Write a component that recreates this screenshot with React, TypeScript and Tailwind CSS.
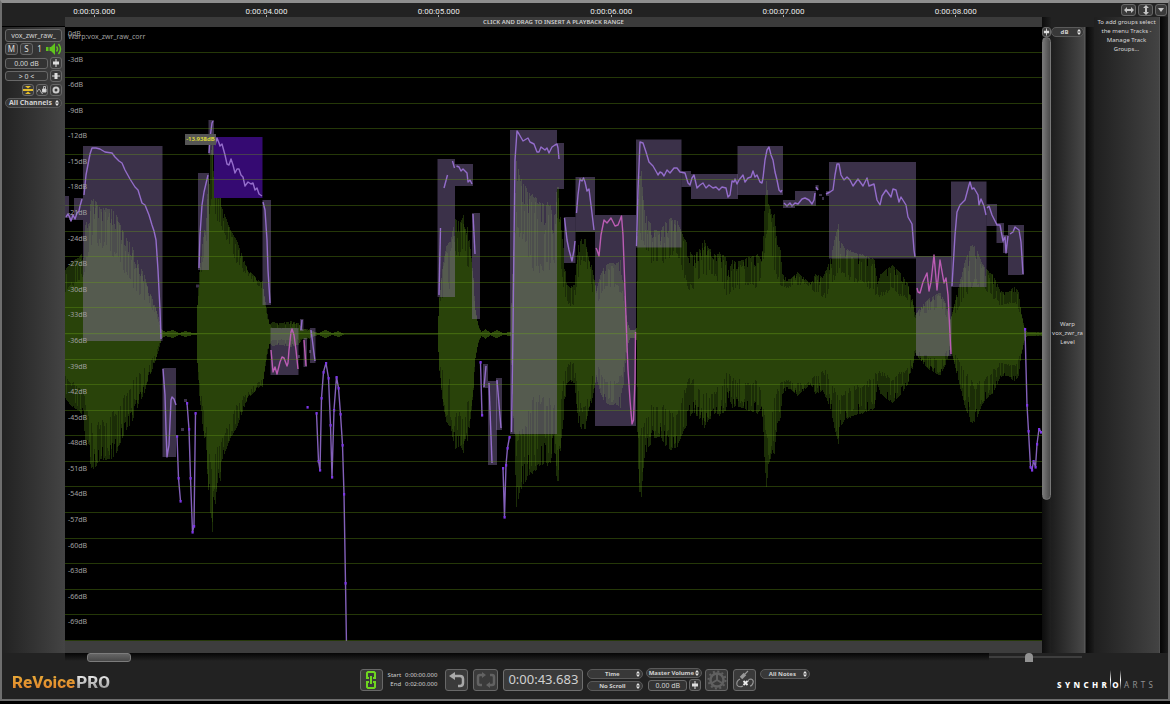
import type { ReactNode } from "react";

type Point = [number, number];

const CENTER = 334;

const times = ["0:00:03.000", "0:00:04.000", "0:00:05.000", "0:00:06.000", "0:00:07.000", "0:00:08.000"];

const levels = Array.from({ length: 24 }, (_, i) => (i === 0 ? "0dB" : `-${i * 3}dB`));

// Peak level of the waveform: x, distance from the centre line
const peaks: Point[] = [
  [65, 64], [70, 72], [78, 77], [83, 84], [85, 111], [91, 134], [93, 136], [100, 127], [112, 126], [116, 119],
  [126, 96], [132, 88], [137, 74], [143, 62], [148, 46], [155, 27], [158, 17], [161, 5], [165, 2], [172, 4],
  [179, 1], [185, 3], [192, 1], [196, 1], [197, 30], [200, 78], [205, 111], [208, 157], [210, 180], [211, 208],
  [212, 200], [213, 165], [215, 171], [218, 140], [220, 149], [222, 126], [225, 118], [230, 105], [235, 97],
  [240, 85], [245, 70], [250, 62], [255, 57], [260, 52], [262, 53], [264, 38], [267, 20], [269, 10], [272, 12],
  [280, 11], [290, 13], [298, 11], [302, 5], [308, 5], [315, 2], [318, 1], [325, 4], [332, 1], [338, 3], [344, 0],
  [437, 0], [439, 40], [443, 74], [446, 91], [450, 94], [455, 117], [460, 112], [463, 121], [468, 106], [471, 77],
  [473, 57], [475, 24], [478, 9], [481, 2], [485, 5], [490, 1], [496, 4], [503, 1], [510, 2], [512, 60],
  [514, 110], [516, 176], [520, 157], [525, 148], [530, 142], [535, 137], [540, 133], [550, 132], [553, 118],
  [555, 122], [557, 163], [559, 132], [561, 105], [564, 77], [566, 51], [570, 47], [574, 50], [576, 70], [578, 90],
  [582, 98], [586, 95], [589, 80], [592, 65], [595, 50], [597, 48], [600, 60], [605, 70], [610, 72], [615, 70],
  [620, 74], [622, 60], [625, 35], [627, 12], [630, 4], [634, 4], [636, 6], [637, 100], [638, 137], [640, 182],
  [642, 150], [644, 124], [648, 115], [655, 105], [660, 104], [665, 112], [670, 117], [677, 113], [682, 101],
  [687, 91], [692, 80], [695, 82], [700, 86], [703, 96], [707, 88], [715, 80], [720, 82], [725, 78], [728, 64],
  [732, 74], [740, 74], [750, 78], [757, 80], [761, 74], [763, 110], [766, 156], [768, 132], [772, 118],
  [774, 120], [777, 90], [780, 85], [782, 60], [785, 57], [790, 55], [797, 62], [803, 57], [810, 50], [815, 60],
  [822, 57], [826, 65], [830, 75], [834, 95], [838, 111], [841, 92], [845, 86], [855, 82], [870, 77], [874, 75],
  [877, 50], [880, 60], [885, 65], [892, 69], [900, 62], [905, 55], [910, 45], [913, 30], [915, 20], [918, 24],
  [925, 33], [935, 40], [940, 42], [945, 32], [950, 15], [952, 22], [955, 35], [960, 55], [965, 75], [970, 88],
  [975, 90], [980, 75], [985, 66], [992, 60], [997, 50], [1000, 43], [1008, 42], [1014, 48], [1018, 43],
  [1021, 20], [1023, 12], [1025, 3], [1030, 2], [1042, 2],
];

// Solid part of the waveform
const body: Point[] = [
  [65, 41], [83, 57], [92, 90], [100, 87], [110, 80], [120, 68], [130, 50], [140, 36], [150, 28], [157, 14],
  [161, 4], [165, 2], [172, 4], [179, 1], [185, 3], [192, 1], [196, 1], [197, 28], [200, 55], [206, 90],
  [211, 130], [215, 115], [220, 105], [230, 85], [235, 70], [245, 60], [255, 50], [262, 45], [267, 15], [272, 5],
  [298, 5], [308, 3], [318, 1], [325, 4], [332, 1], [338, 3], [344, 0], [437, 0], [439, 30], [443, 37],
  [450, 45], [455, 75], [465, 80], [470, 50], [473, 40], [476, 15], [480, 1], [485, 5], [490, 1], [496, 4],
  [503, 1], [510, 2], [513, 60], [516, 110], [520, 90], [525, 85], [530, 70], [535, 55], [545, 65], [550, 55],
  [555, 75], [557, 110], [560, 70], [562, 50], [566, 30], [574, 26], [577, 50], [582, 75], [588, 60], [594, 30],
  [598, 30], [605, 45], [615, 45], [622, 40], [626, 10], [630, 2], [636, 4], [638, 100], [641, 90], [645, 80],
  [655, 65], [665, 70], [675, 80], [682, 60], [688, 40], [695, 42], [700, 55], [710, 60], [720, 50], [728, 35],
  [735, 45], [758, 45], [763, 70], [766, 100], [772, 70], [778, 50], [783, 45], [795, 48], [805, 50], [815, 40],
  [825, 35], [830, 45], [838, 62], [845, 55], [855, 50], [870, 45], [877, 35], [892, 42], [905, 35], [912, 20],
  [915, 15], [925, 20], [940, 26], [950, 10], [955, 20], [965, 35], [975, 50], [985, 42], [1000, 28], [1015, 30],
  [1022, 12], [1025, 2], [1042, 1],
];

// x1, y1, x2, y2 of every note block
const blocks = [
  [65, 196, 69, 218], [69, 214, 74, 220], [74, 198, 83, 220], [83, 146, 162.5, 341], [162.5, 368, 176, 457],
  [198, 173, 209, 270], [208.5, 120, 214, 155], [262.5, 200, 271, 305], [270.5, 328, 298.5, 375],
  [300, 319, 303.5, 331], [303.5, 338, 307, 367], [310, 328, 315.5, 363], [437.5, 159, 455, 297],
  [455, 164, 473, 186], [472, 213, 480, 319], [483, 364, 488, 388], [488, 381, 497, 465], [496, 378, 502, 430],
  [510, 130, 557, 434], [557, 143, 564, 189], [564, 217, 575.5, 263], [575.5, 177, 595, 232],
  [595, 215, 636, 426], [636, 139.5, 681.5, 247.5], [681.5, 171, 691, 187], [691, 174, 738, 199],
  [737.5, 146, 783, 195], [783, 200, 795, 208], [795, 191, 816, 206], [815.5, 185, 818.5, 190],
  [819, 194, 822, 196], [822, 197, 824, 200], [826, 191, 829, 196], [829, 162, 916, 258.5],
  [916, 256, 951.5, 356], [951, 181.5, 986.5, 287], [986.5, 204, 997, 226], [996.5, 223, 1004, 243],
  [1003, 235, 1008, 253], [1008, 225, 1024, 275], [196, 284.5, 199, 287.5], [298, 355, 300, 358],
  [309, 350, 311, 353], [181, 428, 184, 431], [184, 399, 187, 402],
];

const voiced = [
  "66,217 68,214 70,218 71,221 73,215 75,219 77,213 79,211 80,206 82,199",
  "84,195 86,175 90,154 92,148 96,148 100,149 105,152 112,153 115,157 119,161 122,163 125,170 130,179 135,187 138,190 142,203 145,205 149,215 152,225 154,231 156,240 158,270 160,310 161,339",
  "163,369 165,395 166,430 167,457 169,445 171,400 172,397 174,399 176,405",
  "199,268 200,235 202,205 204,192 208,175",
  "209,153 210,138 212,123 213,121",
  "215,145 217,138 219,143 220,146 222,144 225,155 227,164 229,165 231,159 233,165 235,173 237,169 239,169 241,175 243,177 245,186 248,182 251,184 253,183 255,190 257,188 259,194 262,196",
  "263,202 265,210 267,240 268,270 270,303",
  "301,330 302,320",
  "311,330 315,361",
  "439,295 440.5,228",
  "444,188 447.5,175",
  "452.5,161 454.5,168",
  "456.5,166 459,167 461,171 463,169 465,171 467,173 468,182 470,180 472,184",
  "473,214 475,254",
  "484,387 486,366",
  "489,383 492,463",
  "497,380 501,428",
  "511.5,432 513,330 515,160 517,131 519,134 523,141 528,138 530,142 534,144 537,152 539,152 541,147 545,150 547,148 549,153 552,147 555,145 557,144 558,148 559,159",
  "564.5,218 567,240 569,250 572,261 574,250 575,241",
  "576.5,213 578,195 580,179 582,181 583.5,178 585,182 587,191 589,189 591,205 594,230",
  "636.5,246 638,190 640,142 643,143 646,152 649,162 653,166 657,173 658,175 660,172 662,173 664,176 667,170 670,173 674,168 677,168 680,172 685,173 688,183 690,185 692,178 694,175 697,188 700,185 703,183 706,188 709,185 713,188 716,187 719,190 722,187 726,188 728,197 730,195 732,181 734,182 735,179 737,184 739,180 743,175 745,182 748,178 751,177 753,171 755,177 757,175 760,182 762,183 763,178 765,160 767,150 769,147 771,155 773,160 775,172 777,180 779,190 781,192 782,190",
  "784,203 787,206 790,203 792,206 795,203 798,204 802,199 805,198 809,200 812,204 814,200 815,193",
  "816,187 818,190",
  "826,194 828,193 830,192 833,190 835,175 837,164 839,164 841,175 844,180 847,177 850,180 853,186 858,179 863,186 867,178 869,186 874,184 877,200 880,205 882,196 886,190 891,197 893,189 896,190 899,202 901,197 906,205 908,217 912,224 914,250 915,257",
  "952,286 955,235 957,212 960,205 965,200 969,185 970,182 972,189 974,188 978,195 979,205 981,199 984,206 986,215",
  "987,208 989,206 992,215 997,225 1000,225 1003,241 1005,237 1006,253 1008,236",
  "1010,234 1013,232 1015,227 1019,230 1021,242 1023,274",
];

const unvoiced = [
  "271,350 273,372 275,367 277,374 280,362 282,357 284,358 287,366 288,363 289,350 291,332 292,329 294,335 296,350 298,369",
  "304,340 306,366",
  "596,248 597,250 599,256 601,235 604,220 607,223 611,218 613,222 615,226 618,225 620,220 621.5,216 623,235 625,290 627,345 628,370 630,400 632,424 633.5,420 635,380 635.5,332",
  "917,288 918,292 920,293 923,282 927,273 929,291 931,282 934,255 937,290 940,260 944,283 946,278 948,295 951,354",
];

// Free lines, drawn with a handle on each point
const handles: Point[][] = [
  [[177, 436], [178.5, 478], [180.5, 501]],
  [[187, 403], [189, 429], [190.5, 478], [192.5, 532], [194, 526], [195.5, 413]],
  [[307.5, 407]],
  [[316.5, 413], [318.5, 461], [320, 470], [321.5, 398], [323.5, 372], [326, 363], [328.5, 378], [330.5, 425], [332, 477], [334, 410], [336.5, 377], [338.5, 388], [340.5, 414], [342.5, 445], [344, 494], [345.5, 583], [346.5, 645]],
  [[480.5, 362], [482, 415]],
  [[503, 468], [504.5, 517], [506, 465], [507.5, 448], [509.5, 437]],
  [[1025, 329], [1027, 405], [1028.5, 431], [1030.5, 467], [1032, 470], [1033.5, 461], [1035.5, 467], [1037, 444], [1039, 429], [1041, 432]],
];

const noise = (n: number) => {
  const v = Math.sin(n * 12.9898) * 43758.5453;
  return v - Math.floor(v);
};

const valueAt = (points: Point[], x: number) => {
  const i = points.findIndex((p) => p[0] >= x);
  if (i <= 0) return points[0][1];
  const [x0, y0] = points[i - 1];
  const [x1, y1] = points[i];
  return y0 + ((y1 - y0) * (x - x0)) / (x1 - x0);
};

const buildWave = () => {
  let outer = "";
  let inner = "";
  for (let x = 65; x < 1042; x++) {
    const peak = valueAt(peaks, x);
    const solid = Math.min(valueAt(body, x), peak);
    const dip = noise(x + 7);
    const high = peak - (peak - solid) * (dip > 0.75 ? 0.35 * dip : 0.08 * dip);
    const r = noise(x);
    const low = solid + (high - solid) * (r > 0.55 ? 0.5 + r * 0.45 : r * 0.4);
    outer += `M${x} ${Math.round(CENTER - high)}h1V${Math.round(CENTER + high)}h-1z`;
    inner += `M${x} ${Math.round(CENTER - low)}h1V${Math.round(CENTER + low)}h-1z`;
  }
  return { outer, inner };
};

const wave = buildWave();

const Waveform = () => (
  <svg className="absolute inset-0 h-full w-full" viewBox="65 27 977 614" preserveAspectRatio="none" aria-hidden="true">
    <path d={wave.outer} fill="#1b2d07" shapeRendering="crispEdges" />
    <path d={wave.inner} fill="#29430a" shapeRendering="crispEdges" />
    <path d="M65 334H1042" stroke="#33520c" />
    {blocks.map(([x1, y1, x2, y2]) => (
      <rect key={`${x1}-${y1}`} x={x1} y={y1} width={x2 - x1} height={y2 - y1} fill="#a387cb" fillOpacity="0.36" />
    ))}
    <rect x="214" y="137" width="48.5" height="61" fill="#350a72" />
    <g fill="none" strokeWidth="1.4" strokeLinejoin="round">
      {voiced.map((points) => (
        <polyline key={points} points={points} stroke="#946dcb" />
      ))}
      {unvoiced.map((points) => (
        <polyline key={points} points={points} stroke="#bb5cb4" />
      ))}
      {handles.map((points) => (
        <polyline key={points.join()} points={points.join(" ")} stroke="#8360ba" />
      ))}
    </g>
    {handles.flat().map(([x, y]) => (
      <rect key={`${x}-${y}`} x={x - 1} y={y - 1} width="2.2" height="2.6" fill="#7c35e6" />
    ))}
  </svg>
);

const Spinner = () => (
  <svg className="pointer-events-none absolute right-[3px] h-[6px] w-1" viewBox="0 0 4 6" fill="#e8e8e8" aria-hidden="true">
    <path d="M2 0l2 2.500H0zM2 6L0 3.500h4z" />
  </svg>
);

const Dropdown = ({ label, value, size = "text-[6px]", className = "" }: { label: string; value: string; size?: string; className?: string }) => (
  <div className={`relative flex items-center ${className}`}>
    <select
      aria-label={label}
      className={`h-[10px] w-full appearance-none rounded-md border border-[#5a5a5a] bg-[#383838] pr-[6px] text-center leading-[8px] font-bold text-[#d0d0d0] ${size}`}
    >
      <option>{value}</option>
    </select>
    <Spinner />
  </div>
);

const IconButton = ({ label, className = "", children }: { label: string; className?: string; children: ReactNode }) => (
  <button
    type="button"
    aria-label={label}
    className={`flex shrink-0 items-center justify-center rounded-[3px] border border-[#686868] bg-[#3a3a3a] ${className}`}
  >
    {children}
  </button>
);

const Fader = ({ turned = false }: { turned?: boolean }) => (
  <svg className={turned ? "h-2 w-2 rotate-90" : "h-2 w-2"} viewBox="0 0 8 8" fill="#dedede" aria-hidden="true">
    <path d="M3.500 0h1v8h-1zM1 2.500h6v3H1z" />
  </svg>
);

const Field = ({ label, value, className = "" }: { label: string; value: string; className?: string }) => (
  <input
    aria-label={label}
    defaultValue={value}
    className={`min-w-0 rounded-[3px] border border-[#686868] bg-[#333] text-center text-[7px] leading-[9px] text-[#d4d4d4] ${className}`}
  />
);

const TrackPanel = () => (
  <aside className="mt-[9px] flex w-[63px] shrink-0 flex-col border-t border-black bg-linear-to-r from-[#222] to-[#444] px-[3px] pt-[2px]">
    <Field label="Track name" value="vox_zwr_raw_" className="h-[13px] w-full" />
    <div className="flex h-[14px] items-center gap-[2px] text-[8px] text-[#ddd]">
      <button type="button" className="h-3 w-[13px] rounded-[3px] border border-[#686868] bg-[#3a3a3a] leading-[10px]">M</button>
      <button type="button" className="h-3 w-[13px] rounded-[3px] border border-[#686868] bg-[#3a3a3a] leading-[10px]">S</button>
      <span className="flex-1 text-center">1</span>
      <button type="button" aria-label="Monitor">
        <svg className="h-3 w-4" viewBox="0 0 16 12" fill="#5fc41c" aria-hidden="true">
          <path d="M0 4h2.500v4H0zM3.500 4H5l4-4v12L5 8H3.500z" />
          <path d="M10.500 3.500q2 2.500 0 5M12.500 1q4 5 0 10" fill="none" stroke="#5fc41c" strokeWidth="1.500" />
        </svg>
      </button>
    </div>
    <div className="mt-px flex items-center gap-[2px]">
      <Field label="Level" value="0.00 dB" className="h-[11px] w-full" />
      <IconButton label="Level fader" className="h-3 w-3"><Fader /></IconButton>
    </div>
    <div className="mt-px flex items-center gap-[2px]">
      <Field label="Pan" value="> 0 <" className="h-[10px] w-full" />
      <IconButton label="Pan fader" className="h-3 w-3"><Fader turned /></IconButton>
    </div>
    <div className="mt-[2px] flex justify-end gap-[2px]">
      <IconButton label="Collapse" className="h-3 w-3">
        <svg className="h-[10px] w-[10px]" viewBox="0 0 10 10" fill="#e3bd2c" aria-hidden="true">
          <path d="M0 4h10v2H0zM2 1h6L5 3.500zM2 9h6L5 6.500z" />
        </svg>
      </IconButton>
      <IconButton label="Lock pitch" className="h-3 w-3">
        <svg className="h-[10px] w-[10px]" viewBox="0 0 10 10" fill="none" stroke="#ccc" aria-hidden="true">
          <path d="M0 7Q2 2 3.500 6T6 8" strokeWidth="0.800" />
          <path d="M5.500 4h3.500v3H5.500z" fill="#ddd" />
          <path d="M6.500 4V1.500h2V4" strokeWidth="0.800" />
        </svg>
      </IconButton>
      <IconButton label="Settings" className="h-3 w-3">
        <svg className="h-2 w-2" viewBox="0 0 8 8" fill="none" stroke="#ccc" strokeWidth="2" aria-hidden="true">
          <circle cx="4" cy="4" r="2.500" />
        </svg>
      </IconButton>
    </div>
    <Dropdown label="Channels" value="All Channels" size="text-[7px]" className="mt-[2px]" />
  </aside>
);

const LevelView = () => (
  <div className="flex min-w-0 flex-1 flex-col">
    <div className="h-[10px] bg-[#3b3b3b] text-center text-[6px] leading-[10px] font-semibold text-[#d0d0d0]">
      CLICK AND DRAG TO INSERT A PLAYBACK RANGE
    </div>
    <div className="relative flex min-h-0 flex-1 flex-col overflow-hidden bg-black text-[7px] leading-[13px] text-[#a0a0a0]">
      <Waveform />
      {levels.map((level) => (
        <div key={level} className="relative min-h-0 flex-1 border-b border-[#6aa018]/35 pl-[3px]">
          {level}
        </div>
      ))}
      <span className="absolute top-[3px] left-[3px]">Warp:vox_zwr_raw_corr</span>
      <span className="absolute top-[17.500%] left-[12.300%] bg-[#555] px-px text-[6px] leading-[11px] font-semibold text-[#e8e337]">
        -13.938dB
      </span>
    </div>
    <div className="h-3 bg-[#3d3d3d]" />
  </div>
);

const SidePanels = () => (
  <div className="flex w-[126px] shrink-0 text-[6px] leading-[9px] text-[#d8d8d8]">
    <div className="flex w-[9px] flex-col items-center bg-linear-to-r from-[#0c0c0c] to-[#202020] pt-[10px]">
      <IconButton label="Vertical zoom" className="h-[10px] w-[9px]"><Fader /></IconButton>
      <div className="h-[74%] w-[9px] rounded-md border border-[#777] bg-linear-to-r from-[#777] to-[#4b4b4b]" />
    </div>
    <div className="mt-[10px] flex w-[34px] flex-col border-r border-[#555] bg-linear-to-r from-[#1d1d1d] to-[#484848]">
      <Dropdown label="Scale" value="dB" />
      <div className="flex flex-1 flex-col items-center justify-center pb-6 text-center">
        <span>Warp</span>
        <span>vox_zwr_ra</span>
        <span>Level</span>
      </div>
    </div>
    <div className="mt-[10px] w-[9px] border-l border-[#333] bg-linear-to-r from-[#080808] to-[#1c1c1c]" />
    <div className="flex-1 border-r border-[#505050] bg-linear-to-r from-[#1f1f1f] to-[#434343] pt-px text-center">
      <p className="px-px">To add groups select the menu Tracks - Manage Track Groups...</p>
    </div>
    <div className="w-2 bg-linear-to-r from-[#060606] to-[#1c1c1c]" />
  </div>
);

const ScrollRow = () => (
  <div className="flex h-2 shrink-0 items-center pr-[86px] pl-[63px]">
    <div className="h-2 flex-1 bg-linear-to-b from-[#060606] to-[#222] pl-[22px]">
      <div className="h-[9px] w-[44px] rounded-[3px] border border-[#7c7c7c] bg-linear-to-b from-[#666] to-[#484848]" />
    </div>
    <div className="flex h-2 w-[93px] items-center">
      <input
        type="range"
        aria-label="Zoom"
        defaultValue={42}
        className="h-[2px] w-full appearance-none bg-[#3e3e3e] [&::-webkit-slider-thumb]:h-[9px] [&::-webkit-slider-thumb]:w-2 [&::-webkit-slider-thumb]:appearance-none [&::-webkit-slider-thumb]:rounded-t-full [&::-webkit-slider-thumb]:bg-[#929292]"
      />
    </div>
  </div>
);

const Transport = () => (
  <div className="flex items-center text-[#d0d0d0]">
    <IconButton label="Link" className="h-[22px] w-[23px]">
      <svg className="h-[18px] w-3" viewBox="0 0 12 18" fill="none" stroke="#6fd620" strokeWidth="2" aria-hidden="true">
        <path d="M4 7H2V2l1-1h6l1 1v5H8M4 11H2v5l1 1h6l1-1v-5H8M6 5v8" />
      </svg>
    </IconButton>
    <dl className="ml-[5px] grid grid-cols-[auto_auto] gap-x-[4px] text-right text-[6px] leading-[9px]">
      <dt>Start</dt>
      <dd>0:00:00.000</dd>
      <dt>End</dt>
      <dd>0:02:00.000</dd>
    </dl>
    <IconButton label="Return" className="ml-2 h-[22px] w-[23px]">
      <svg className="h-4 w-4" viewBox="0 0 16 16" fill="none" stroke="#a8a8a8" strokeWidth="2.500" aria-hidden="true">
        <path d="M5 4h6q3 0 3 3v4q0 3-3 3H9" />
        <path d="M0 4l6-4v8z" fill="#a8a8a8" stroke="none" />
      </svg>
    </IconButton>
    <IconButton label="Loop" className="ml-[5px] h-[22px] w-[25px]">
      <svg className="h-4 w-5" viewBox="0 0 20 16" fill="none" stroke="#626262" strokeWidth="2.500" aria-hidden="true">
        <path d="M7 3H4Q2 3 2 5v6q0 2 2 2h2M13 13h3q2 0 2-2V5q0-2-2-2h-2" />
        <path d="M6 0l4 3-4 3zM14 10l-4 3 4 3z" fill="#626262" stroke="none" />
      </svg>
    </IconButton>
    <output className="ml-[5px] flex h-[22px] w-20 items-center justify-center rounded-[3px] border border-[#707070] bg-[#3a3a3a] text-[13px]">
      0:00:43.683
    </output>
    <div className="ml-1 flex w-14 flex-col gap-[2px]">
      <Dropdown label="Time format" value="Time" />
      <Dropdown label="Scroll mode" value="No Scroll" />
    </div>
    <div className="ml-[3px] flex w-14 flex-col gap-px">
      <Dropdown label="Volume target" value="Master Volume" />
      <div className="flex items-center gap-[2px] pr-px pl-[2px]">
        <Field label="Volume" value="0.00 dB" className="h-[11px] w-full" />
        <IconButton label="Volume fader" className="h-3 w-3"><Fader /></IconButton>
      </div>
    </div>
    <IconButton label="Process" className="ml-[3px] h-[22px] w-[23px]">
      <svg className="h-5 w-5" viewBox="0 0 20 20" fill="none" stroke="#606060" aria-hidden="true">
        <circle cx="10" cy="10" r="8.500" strokeWidth="2" strokeDasharray="2 2.450" />
        <circle cx="10" cy="10" r="6.500" strokeWidth="2.500" />
        <path d="M10 10V4M10 10l-5 3M10 10l5 3" strokeWidth="2" />
      </svg>
    </IconButton>
    <IconButton label="Disconnect input" className="ml-[5px] h-[22px] w-[23px]">
      <svg className="h-5 w-5" viewBox="0 0 20 20" fill="none" stroke="#999" aria-hidden="true">
        <path d="M6 8l4-4" strokeWidth="3.500" />
        <path d="M10 4l3-3M5 9q-4 2-3 6 2 3 6 1M13 12q0-3 3-3 3 1 2 4-1 3-3 3" strokeWidth="1.100" />
        <path d="M8.500 11l4 4M12.500 11l-4 4" stroke="#eee" strokeWidth="1.800" />
      </svg>
    </IconButton>
    <Dropdown label="Notes" value="All Notes" className="mb-3 ml-1 w-[50px]" />
  </div>
);

const Streak = () => <i className="h-5 w-px bg-linear-to-b from-transparent via-white to-transparent" />;

const Footer = () => (
  <footer className="grid h-[38px] shrink-0 grid-cols-[1fr_auto_1fr] items-center px-[10px] pb-px">
    <a href="#revoice" className="flex gap-px pt-1 font-[Roboto,sans-serif] text-[17px] leading-5 font-extrabold">
      <span className="bg-linear-to-b from-[#e8b13c] to-[#df7c27] bg-clip-text text-transparent">ReVoice</span>
      <span className="bg-linear-to-b from-white to-[#8a8a8a] bg-clip-text text-transparent">PRO</span>
    </a>
    <Transport />
    <a href="#synchro" className="mr-[5px] flex w-24 items-end justify-between justify-self-end text-[8px] leading-[10px] font-extrabold text-white">
      {[..."SYNCHR"].map((letter, i) => (
        <span key={i}>{letter}</span>
      ))}
      <span className="flex items-end gap-px">
        <Streak />
        <span>O</span>
        <Streak />
      </span>
      {[..."ARTS"].map((letter, i) => (
        <span key={i} className="font-normal text-[#909090]">{letter}</span>
      ))}
    </a>
  </footer>
);

const Header = () => (
  <header className="flex h-[14px] shrink-0">
    <div className="flex min-w-0 flex-1 pl-[6px] font-[Roboto,sans-serif] text-[8px] leading-[17px] text-[#e8e8e8]">
      {times.map((time) => (
        <div key={time} className="flex flex-1 flex-col items-center">
          <span className="h-3">{time}</span>
          <i className="h-[2px] w-px bg-[#aaa]" />
        </div>
      ))}
    </div>
    <div className="flex w-[126px] shrink-0 items-center justify-end gap-[2px] pr-px">
      <IconButton label="Fit width" className="h-3 w-[15px]">
        <svg className="h-2 w-[10px]" viewBox="0 0 10 8" fill="#c4c4c4" aria-hidden="true">
          <path d="M0 4l3-3v2h4V1l3 3-3 3V5H3v2z" />
        </svg>
      </IconButton>
      <IconButton label="Fit height" className="h-3 w-[15px]">
        <svg className="h-[10px] w-2" viewBox="0 0 8 10" fill="#c4c4c4" aria-hidden="true">
          <path d="M4 0l3 3H5v4h2l-3 3-3-3h2V3H1z" />
        </svg>
      </IconButton>
      <IconButton label="Zoom menu" className="h-3 w-3">
        <svg className="h-1 w-[6px]" viewBox="0 0 6 4" fill="#c4c4c4" aria-hidden="true">
          <path d="M0 0h6L3 4z" />
        </svg>
      </IconButton>
    </div>
  </header>
);

export default function App() {
  return (
    <div className="h-screen bg-black pb-[3px] font-['Noto_Sans','Open_Sans',sans-serif]">
      <main className="flex h-full flex-col overflow-hidden border-2 border-t-[3px] border-[#6e6e6e] border-t-[#8e8e8e] bg-[#222]">
        <Header />
        <div className="flex min-h-0 flex-1">
          <TrackPanel />
          <LevelView />
          <SidePanels />
        </div>
        <ScrollRow />
        <Footer />
      </main>
    </div>
  );
}
